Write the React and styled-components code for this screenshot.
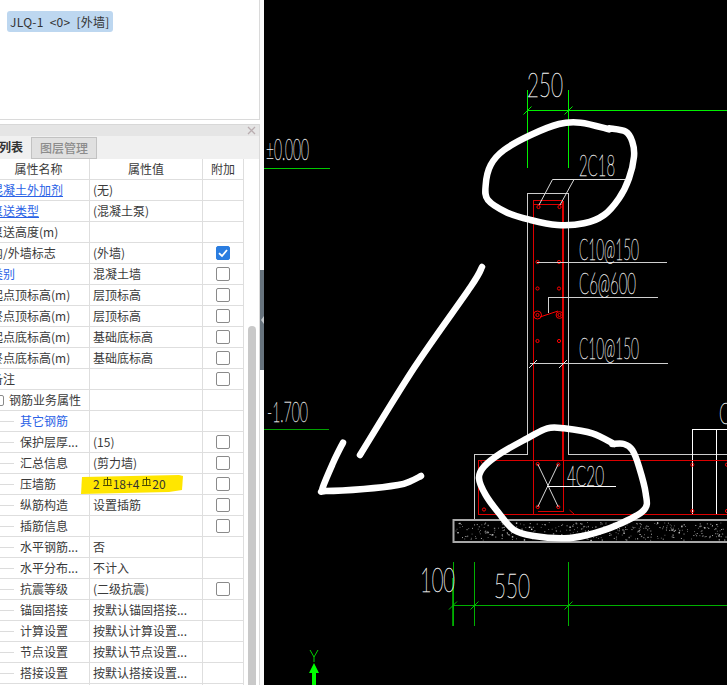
import React from "react";
import styled, { createGlobalStyle } from "styled-components";

const Global = createGlobalStyle`
  html, body { margin: 0; padding: 0; background: #fff; }
  body { font-family: "Noto Sans CJK SC", "Liberation Sans", sans-serif; }
`;

const Page = styled.div`
  width: 727px; height: 685px; display: flex; overflow: hidden; background: #fff;
`;
const Sidebar = styled.div`
  width: 260px; flex: none; display: flex; flex-direction: column; overflow: hidden;
`;
const Splitter = styled.div`
  width: 4px; flex: none; background: #fafafa; display: flex; align-items: center;
`;
const SplitHandle = styled.div`
  width: 4px; height: 100px; margin-top: -45px; background: #67737d; display: flex; align-items: center; justify-content: flex-end;
  &::after { content: ""; border-style: solid; border-width: 4px 3px 4px 0; border-color: transparent #c4c8cc transparent transparent; }
`;
const Canvas = styled.div`
  flex: 1; background: #000; overflow: hidden;
  svg { display: block; }
`;
const ListPanel = styled.div`
  flex: none; padding: 8px 7px; box-sizing: border-box; background: #fff;
  border-right: 1px solid #dadada; border-bottom: 1px solid #dadada; width: 260px; height: 120px;
`;
const Chip = styled.div`
  display: inline-block; height: 21px; line-height: 21px; padding: 0 3px; border-radius: 3px;
  background: #bdd7f0; color: #333; font-size: 12px; white-space: pre; letter-spacing: .28px;
`;
const PropsPanel = styled.div`
  flex: 1; margin-top: 4px; min-height: 0; display: flex; flex-direction: column; background: #fff;
  border-right: 1px solid #dadada; width: 260px; box-sizing: border-box;
`;
const TitleBar = styled.div`
  height: 11px; flex: none; background: #e5e5e5; border-top: 1px solid #d8d8d8; display: flex; align-items: center; justify-content: flex-end; padding-right: 3px;
  svg { display: block; }
`;
const TabStrip = styled.div`
  height: 23px; flex: none; background: #f0f0f0; display: flex; margin-left: -20px; box-sizing: border-box; padding-top: 1px;
`;
const Tab = styled.div`
  box-sizing: border-box; height: 22px; line-height: 20px; text-align: ${p => (p.$active ? "right" : "center")};
  font-size: 12px; font-weight: ${p => (p.$active ? 700 : 500)};
  width: ${p => (p.$active ? "51px" : "66px")};
  padding-right: ${p => (p.$active ? "8px" : "0")};
  color: ${p => (p.$active ? "#333" : "#8c8c8c")};
  background: ${p => (p.$active ? "#f0f0f0" : "#e0e0e0")};
  border: ${p => (p.$active ? "none" : "1px solid #c2c2c2")};
  border-bottom: 1px solid ${p => (p.$active ? "#f0f0f0" : "#c2c2c2")};
`;
const TableWrap = styled.div`
  flex: 1; min-height: 0; display: flex; overflow: hidden;
`;
const Table = styled.div`
  width: 256px; flex: none; margin-left: -12px;
`;
const Row = styled.div`
  display: grid; grid-template-columns: 102px 113px 41px; height: 21px; box-sizing: border-box;
  border-bottom: 1px solid #dedede; font-size: 12px; line-height: 20px; color: #3a3a3a;
`;
const Cell = styled.div`
  position: relative; box-sizing: border-box; border-right: 1px solid #dedede; white-space: nowrap; overflow: hidden;
  padding-left: 3px; display: flex; align-items: center;
`;
const MarkedCell = styled(Cell)`
  overflow: visible;
`;
const HeadCell = styled(Cell)`
  justify-content: center; padding-left: 0;
`;
const CheckCell = styled(Cell)`
  justify-content: center; padding-left: 0;
`;
const NameLabel = styled.span`
  color: ${p => (p.$link ? "#2a62e6" : "#3a3a3a")};
  text-decoration: ${p => (p.$under ? "underline" : "none")};
`;
const SubName = styled(Cell)`
  padding-left: 32px;
  &::before { content: ""; position: absolute; left: 0; width: 26px; top: 10px; height: 1px; background: #dcdcdc; }
`;
const GroupName = styled(Cell)`
  padding-left: 5px; gap: 4px;
`;
const Expander = styled.span`
  width: 11px; height: 11px; flex: none; box-sizing: border-box; border: 1px solid #8a8a8a; border-radius: 2px; margin-right: 1px;
`;
const Check = styled.span`
  width: 14px; height: 14px; box-sizing: border-box; border-radius: 2px; margin-top: -1px;
  border: 1px solid ${p => (p.$on ? "#2b7de0" : "#8a8a8a")};
  background: ${p => (p.$on ? "#2b7de0" : "#fff")};
  display: flex; align-items: center; justify-content: center;
`;
const Marker = styled.svg`
  position: absolute; left: -11px; top: 0; width: 105px; height: 20px;
`;
const MarkedText = styled.span`
  position: relative; display: inline-flex; align-items: center; color: #333;
`;
const Scroll = styled.div`
  flex: 1; position: relative;
`;
const Thumb = styled.div`
  width: 8px; margin: 167px 0 0 4px; height: 400px; background: #c9c9c9; border-radius: 4px 4px 0 0;
`;

const Steel = () => (
  <svg width="9" height="10" viewBox="0 0 9 10" style={{ margin: "-5px 1px 0 3px" }}>
    <path d="M1 2.5H8M1.2 2.5V7.5M4.5 0V8.5M7.8 2.5V7.5M0 8.5H9" fill="none" stroke="#3a3a00" strokeWidth=".9" />
  </svg>
);

const rows = [
  { n: "混凝土外加剂", v: "(无)", link: 1, under: 1 },
  { n: "泵送类型", v: "(混凝土泵)", link: 1, under: 1 },
  { n: "泵送高度(m)" },
  { n: "内/外墙标志", v: "(外墙)", c: 2 },
  { n: "类别", v: "混凝土墙", link: 1, c: 1 },
  { n: "起点顶标高(m)", v: "层顶标高", c: 1 },
  { n: "终点顶标高(m)", v: "层顶标高", c: 1 },
  { n: "起点底标高(m)", v: "基础底标高", c: 1 },
  { n: "终点底标高(m)", v: "基础底标高", c: 1 },
  { n: "备注", c: 1 },
  { n: "钢筋业务属性", group: 1 },
  { n: "其它钢筋", sub: 1, link: 1 },
  { n: "保护层厚...", v: "(15)", sub: 1, c: 1 },
  { n: "汇总信息", v: "(剪力墙)", sub: 1, c: 1 },
  { n: "压墙筋", mark: 1, sub: 1, c: 1 },
  { n: "纵筋构造", v: "设置插筋", sub: 1, c: 1 },
  { n: "插筋信息", sub: 1, c: 1 },
  { n: "水平钢筋...", v: "否", sub: 1 },
  { n: "水平分布...", v: "不计入", sub: 1 },
  { n: "抗震等级", v: "(二级抗震)", sub: 1, c: 1 },
  { n: "锚固搭接", v: "按默认锚固搭接...", sub: 1 },
  { n: "计算设置", v: "按默认计算设置...", sub: 1 },
  { n: "节点设置", v: "按默认节点设置...", sub: 1 },
  { n: "搭接设置", v: "按默认搭接设置...", sub: 1 },
  { n: "", sub: 1 },
];

const NameCell = ({ r }) => {
  const label = <NameLabel $link={r.link} $under={r.under}>{r.n}</NameLabel>;
  if (r.group) return <GroupName><Expander />{label}</GroupName>;
  if (r.sub) return <SubName>{label}</SubName>;
  return <Cell>{label}</Cell>;
};

/* ---------- CAD drawing ---------- */
const smooth = pts => {
  let d = `M${pts[0][0]} ${pts[0][1]}`;
  for (let i = 0; i < pts.length - 1; i++) {
    const p0 = pts[i - 1] || pts[i], p1 = pts[i], p2 = pts[i + 1], p3 = pts[i + 2] || p2;
    const c1 = [p1[0] + (p2[0] - p0[0]) / 6, p1[1] + (p2[1] - p0[1]) / 6];
    const c2 = [p2[0] - (p3[0] - p1[0]) / 6, p2[1] - (p3[1] - p1[1]) / 6];
    d += `C${c1[0].toFixed(1)} ${c1[1].toFixed(1)} ${c2[0].toFixed(1)} ${c2[1].toFixed(1)} ${p2[0].toFixed(1)} ${p2[1].toFixed(1)}`;
  }
  return d;
};
const top = yo => ([x, y]) => [264 + x / 3, yo + y / 3];
const loopTop = [[1035,208],[950,188],[885,192],[800,225],[720,270],[680,315],[665,375],[672,420],[730,458],[800,480],[880,495],[960,490],[1020,465],[1065,415],[1095,355],[1110,290],[1105,245],[1085,215],[1035,205]].map(top(60));
const loopBottom = [[1050,222],[985,190],[900,175],[850,175],[790,205],[710,250],[660,290],[645,325],[665,375],[705,430],[750,480],[810,498],[900,505],[970,495],[1060,465],[1140,420],[1145,370],[1125,290],[1105,240],[1080,222],[1045,222]].map(top(370));
const shaft = [[482,267],[470.7,286.7],[414,368],[360,455]];
const head = [[343,442.7],[333,463],[322.3,489],[326,491],[364,489],[398,485],[411,481],[421,476]];

const speck = (() => {
  const out = [];
  let s = 12345;
  const rnd = () => ((s = (s * 1103515245 + 12345) & 0x7fffffff) / 0x7fffffff);
  for (let i = 0; i < 380; i++) {
    out.push([455 + rnd() * 272, 522 + rnd() * 18, rnd() > 0.85 ? 1.4 : 0.9, rnd() > 0.6 ? "#cfcfcf" : "#7c7c7c"]);
  }
  return out;
})();

const CadText = styled.text`
  font-family: Lato, Inter, "Liberation Sans", sans-serif;
  font-weight: 100;
  fill: #f4f4f4;
  stroke: #f4f4f4;
  stroke-width: .4px;
`;
const T = ({ x, base, w, size, children }) => (
  <CadText x={x} y={base} fontSize={size} textLength={w} lengthAdjust="spacingAndGlyphs">{children}</CadText>
);
const L = ({ d, c, w = 1 }) => <path d={d} stroke={c} strokeWidth={w} fill="none" shapeRendering="crispEdges" />;
const Tick = ({ x, y, c }) => <path d={`M${x - 4} ${y + 4}L${x + 4} ${y - 4}`} stroke={c} strokeWidth="1" />;
const Bar = ({ x, y }) => <circle cx={x} cy={y} r="1.6" fill="none" stroke="#ff0000" strokeWidth="1" />;

const Drawing = () => (
  <svg width="463" height="685" viewBox="264 0 463 685">
    {/* foundation */}
    <rect x="453.5" y="520" width="290" height="22" fill="#000" stroke="#a8a8a8" strokeWidth="2" />
    {speck.map(([x, y, r, c], i) => <rect key={i} x={x} y={y} width={r} height={r} fill={c} />)}

    {/* concrete outline */}
    <L c="#cccccc" d="M527.5 454.5V193.5H568.5V454.5H727M527.5 454.5H474.5V519" />
    <L c="#ffffff" d="M692.5 514V429.5H727M716.5 429.5V514" />

    {/* rebar */}
    <L c="#dc0000" d="M533.5 514V200.5H562.5V460M533.5 204.5H562.5M563.5 200.5V460" />
    <L c="#dc0000" d="M478.5 460H727M478.5 514.5H727M478.5 460V514.5M563.5 460V511.5H537.5" />
    <path d="M569.5 510L574 514M480 460L484 466" stroke="#dc0000" fill="none" />
    {[[538.5,207],[559.5,207],[537.5,262],[559,262],[537.5,288.5],[559,288.5],[537.5,341],[559,341],[537.7,464],[558.3,464.5],[537.7,507],[558.3,507],[484,509.5],[692.3,464.7],[692.3,511],[727,464.7],[727,511]].map(([x,y],i)=><Bar key={i} x={x} y={y} />)}
    <circle cx="537.5" cy="315" r="4" fill="none" stroke="#ff0000" />
    <circle cx="559.5" cy="315" r="3.4" fill="none" stroke="#ff0000" />
    <Bar x={537.5} y={315} /><Bar x={559.5} y={315} />
    <path d="M540 317L558 311" stroke="#ff0000" />

    {/* leaders */}
    <path d="M539 205L552.5 179.5H625M560 205L574 179.5" stroke="#dcdcdc" fill="none" />
    <L c="#d0d0d0" d="M537 262.5H667M548.5 313V297.5H658M530 363.5H668" />
    <Tick x={533} y={364} c="#e0e0e0" /><Tick x={563} y={364} c="#e0e0e0" />
    <path d="M537.7 464L558.3 507M558.3 464L537.7 507" stroke="#d8d8d8" fill="none" />
    <L c="#ffffff" d="M547 486.5H616" />

    {/* dimensions */}
    <L c="#00f000" d="M527.5 90V168M568.5 90V168M527 110.5H727" />
    <Tick x={527.5} y={110.5} c="#00f000" /><Tick x={568.5} y={110.5} c="#00f000" />
    <L c="#00c800" d="M264 168.5H330" />
    <L c="#00a000" d="M264 429.5H329" />
    <L c="#00b000" d="M453.5 562V626M474.5 562V626M568.5 562V626M453 605.5H727" />
    <L c="#009000" d="M452.5 578V626" />
    <Tick x={453} y={605.5} c="#00c000" /><Tick x={474.5} y={605.5} c="#00c000" /><Tick x={568.5} y={605.5} c="#00c000" />

    {/* texts */}
    <T x={527} base={97} w={36} size={33}>250</T>
    <T x={266} base={160} w={43} size={29}>±0.000</T>
    <T x={579} base={176} w={36} size={29}>2C18</T>
    <T x={579} base={260} w={60} size={29}>C10@150</T>
    <T x={579} base={294} w={57} size={29}>C6@600</T>
    <T x={579} base={359} w={60} size={29}>C10@150</T>
    <T x={567} base={486} w={37} size={28}>4C20</T>
    <T x={267} base={422} w={41} size={28}>-1.700</T>
    <T x={420} base={592} w={35} size={34}>100</T>
    <T x={494} base={598} w={36} size={34}>550</T>
    <T x={719} base={424} w={12} size={29}>C</T>

    {/* axis */}
    <path d="M310 650L314 657L318 650M314 657V662" stroke="#00d000" fill="none" />
    <path d="M314 663L319 673H316V685H312V673H309Z" fill="#00ff00" />

    {/* marker strokes */}
    <g fill="none" stroke="#ffffff" strokeWidth="6.5" strokeLinecap="round" strokeLinejoin="round">
      <path d={smooth(loopTop)} />
      <path d={smooth(loopBottom)} />
      <path d={smooth(shaft)} />
      <path d={smooth(head)} />
    </g>
  </svg>
);

export default function App() {
  return (
    <Page>
      <Global />
      <Sidebar>
        <ListPanel><Chip>JLQ-1  {"<0>"}  [外墙]</Chip></ListPanel>
        <PropsPanel>
          <TitleBar>
            <svg width="9" height="9" viewBox="0 0 9 9"><path d="M1 1L8 8M8 1L1 8" stroke="#b9adb0" strokeWidth="1.3" /></svg>
          </TitleBar>
          <TabStrip>
            <Tab $active>列表</Tab>
            <Tab>图层管理</Tab>
          </TabStrip>
          <TableWrap>
            <Table>
              <Row>
                <HeadCell>属性名称</HeadCell>
                <HeadCell>属性值</HeadCell>
                <HeadCell>附加</HeadCell>
              </Row>
              {rows.map((r, i) => (
                <Row key={i}>
                  <NameCell r={r} />
                  {r.mark ? (
                    <MarkedCell>
                      <Marker viewBox="0 0 105 20">
                        <path d="M3 3L100 1L104 2L103 16L90 18L2 20Z" fill="#ffe600" />
                      </Marker>
                      <MarkedText>2<Steel />18+4<Steel />20</MarkedText>
                    </MarkedCell>
                  ) : (
                    <Cell>{r.v}</Cell>
                  )}
                  <CheckCell>
                    {r.c ? (
                      <Check $on={r.c === 2}>
                        {r.c === 2 && (
                          <svg width="10" height="10" viewBox="0 0 10 10"><path d="M1 5.2L4 8L9 2" fill="none" stroke="#fff" strokeWidth="1.8" /></svg>
                        )}
                      </Check>
                    ) : null}
                  </CheckCell>
                </Row>
              ))}
            </Table>
            <Scroll><Thumb /></Scroll>
          </TableWrap>
        </PropsPanel>
      </Sidebar>
      <Splitter><SplitHandle /></Splitter>
      <Canvas><Drawing /></Canvas>
    </Page>
  );
}
